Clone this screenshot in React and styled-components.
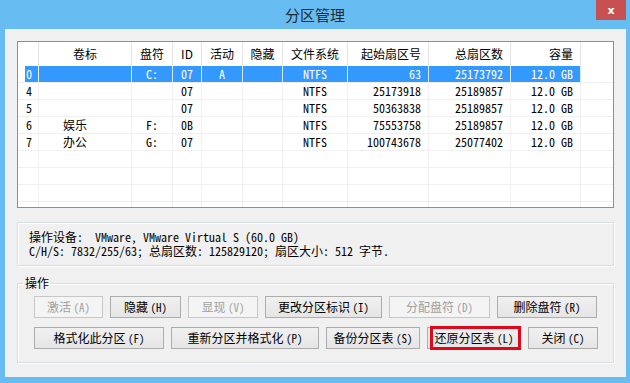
import React from 'react';
import styled, { createGlobalStyle } from 'styled-components';

const GlobalStyle = createGlobalStyle`
  html, body { margin: 0; padding: 0; background: #fff; }
  body { font-family: "Noto Sans CJK SC", sans-serif; }
  * { box-sizing: border-box; }
`;

const columns = [
  { key: 'label', title: '卷标', align: 'left', head: 'center' },
  { key: 'drive', title: '盘符', align: 'center', head: 'center' },
  { key: 'id', title: 'ID', align: 'center', head: 'center' },
  { key: 'active', title: '活动', align: 'center', head: 'center' },
  { key: 'hidden', title: '隐藏', align: 'center', head: 'center' },
  { key: 'fs', title: '文件系统', align: 'center', head: 'center' },
  { key: 'start', title: '起始扇区号', align: 'right', head: 'right' },
  { key: 'total', title: '总扇区数', align: 'right', head: 'right' },
  { key: 'size', title: '容量', align: 'right', head: 'right' },
];

const rows = [
  { index: '0', label: '', drive: 'C:', id: '07', active: 'A', hidden: '', fs: 'NTFS', start: '63', total: '25173792', size: '12.0 GB', selected: true },
  { index: '4', label: '', drive: '', id: '07', active: '', hidden: '', fs: 'NTFS', start: '25173918', total: '25189857', size: '12.0 GB' },
  { index: '5', label: '', drive: '', id: '07', active: '', hidden: '', fs: 'NTFS', start: '50363838', total: '25189857', size: '12.0 GB' },
  { index: '6', label: '娱乐', drive: 'F:', id: '0B', active: '', hidden: '', fs: 'NTFS', start: '75553758', total: '25189857', size: '12.0 GB' },
  { index: '7', label: '办公', drive: 'G:', id: '07', active: '', hidden: '', fs: 'NTFS', start: '100743678', total: '25077402', size: '12.0 GB' },
];

const emptyRows = 4;

export default function App() {
  return (
    <>
      <GlobalStyle />
      <Window>
        <TitleBar>
          <Title>分区管理</Title>
          <CloseButton>x</CloseButton>
        </TitleBar>
        <Client>
          <List>
            <Row $header>
              <HeadCell />
              {columns.map(c => (
                <HeadCell key={c.key} $align={c.head}>{c.title}</HeadCell>
              ))}
              <HeadCell $last />
            </Row>
            {rows.map(r => (
              <Row key={r.index}>
                <IndexCell $selected={r.selected}>{r.index}</IndexCell>
                {columns.map(c => (
                  <Cell key={c.key} $align={c.align} $selected={r.selected}>{r[c.key]}</Cell>
                ))}
                <Cell $last />
              </Row>
            ))}
            {Array.from({ length: emptyRows }).map((_, i) => (
              <Row key={'e' + i}>
                <IndexCell />
                {columns.map(c => <Cell key={c.key} />)}
                <Cell $last />
              </Row>
            ))}
          </List>

          <InfoBox>
            <div>操作设备:  VMware, VMware Virtual S (60.0 GB)</div>
            <div>C/H/S: 7832/255/63; 总扇区数: 125829120; 扇区大小: 512 字节.</div>
          </InfoBox>

          <Group>
            <Legend>操作</Legend>
            <ButtonRow>
              <Button $w={69} disabled>激活 <Key>(A)</Key></Button>
              <Button $w={71}>隐藏 <Key>(H)</Key></Button>
              <Button $w={70} disabled>显现 <Key>(V)</Key></Button>
              <Button $w={117}>更改分区标识 <Key>(I)</Key></Button>
              <Button $w={101} disabled>分配盘符 <Key>(D)</Key></Button>
              <Button $w={100}>删除盘符 <Key>(R)</Key></Button>
            </ButtonRow>
            <ButtonRow>
              <Button $w={130}>格式化此分区 <Key>(F)</Key></Button>
              <Button $w={148}>重新分区并格式化 <Key>(P)</Key></Button>
              <Button $w={94}>备份分区表 <Key>(S)</Key></Button>
              <Button $w={94} $marked>还原分区表 <Key>(L)</Key></Button>
              <Button $w={70}>关闭 <Key>(C)</Key></Button>
            </ButtonRow>
          </Group>
        </Client>
      </Window>
    </>
  );
}

const Window = styled.div`
  width: 630px;
  height: 383px;
  background: #67bdf2;
  display: flex;
  flex-direction: column;
`;

const TitleBar = styled.div`
  height: 29px;
  display: grid;
  grid-template-columns: 1fr auto 1fr;
  align-items: start;
`;

const Title = styled.div`
  grid-column: 2;
  font-size: 15px;
  line-height: 29px;
  color: #1c2a36;
`;

const CloseButton = styled.div`
  justify-self: end;
  width: 30px;
  height: 20px;
  margin-right: 4px;
  background: #c75050;
  color: #fff;
  font: bold 11px "DejaVu Sans", sans-serif;
  display: flex;
  align-items: center;
  justify-content: center;
`;

const Client = styled.div`
  margin: 0 4px 0 5px;
  height: 348px;
  background: #f0f0f0;
  padding: 12px 12px 0;
  display: flex;
  flex-direction: column;
`;

const List = styled.div`
  height: 167px;
  border: 1px solid #8e8f8f;
  background: #fff;
  overflow: hidden;
  flex-shrink: 0;
`;

const Row = styled.div`
  display: grid;
  grid-template-columns: 21px 93px 41px 29px 41px 40px 65px 81px 82px 70px 1fr;
  height: ${p => (p.$header ? 24 : 17)}px;
`;

const HeadCell = styled.div`
  border-right: ${p => (p.$last ? 'none' : '1px solid #e5e5e5')};
  font: 12px/24px "Noto Sans CJK SC", sans-serif;
  color: #000;
  text-align: ${p => p.$align || 'left'};
  padding: 0 7px;
  white-space: nowrap;
`;

const mono = `"Noto Sans Mono CJK SC", "Noto Sans CJK SC", monospace`;

const Cell = styled.div`
  border-right: ${p => (p.$last ? 'none' : `1px solid ${p.$selected ? '#d6eaff' : '#f0f0f0'}`)};
  border-bottom: 1px solid #f0f0f0;
  background: ${p => (p.$selected ? '#3399ff' : 'transparent')};
  color: ${p => (p.$selected ? '#fff' : '#000')};
  font: 12px/16px ${mono};
  text-align: ${p => p.$align || 'left'};
  padding: 0 7px 0 ${p => (p.$align === 'left' ? 24 : 7)}px;
  white-space: nowrap;
`;

const IndexCell = styled.div`
  border-right: 1px solid #f0f0f0;
  border-bottom: 1px solid #f0f0f0;
  background: ${p => (p.$selected ? 'linear-gradient(to right, transparent 7px, #3399ff 7px)' : 'transparent')};
  color: ${p => (p.$selected ? '#fff' : '#000')};
  font: 12px/16px ${mono};
  padding-left: 8px;
`;

const InfoBox = styled.div`
  margin-top: 14px;
  height: 44px;
  border: 1px solid #d5dfe5;
  box-shadow: inset 1px 1px #fff, 1px 1px #fff;
  padding: 7px 11px;
  font: 12px/14px ${mono};
  color: #000;
  white-space: pre;
  flex-shrink: 0;
`;

const Group = styled.fieldset`
  margin: 9px 0 0;
  border: 1px solid #d5dfe5;
  box-shadow: inset 1px 1px #fff, 1px 1px #fff;
  padding: 5px 14px 13px 16px;
  display: flex;
  flex-direction: column;
  gap: 9px;
  min-width: 0;
`;

const Legend = styled.legend`
  font: 12px/16px "Noto Sans CJK SC", sans-serif;
  color: #000;
  padding: 0 2px;
  margin-left: -11px;
`;

const ButtonRow = styled.div`
  display: flex;
  gap: 7px;
`;

const Button = styled.button`
  position: relative;
  width: ${p => p.$w}px;
  height: 22px;
  padding: 0;
  border: 1px solid ${p => (p.disabled ? '#c7c7c7' : '#acacac')};
  background: ${p => (p.disabled ? '#f4f4f4' : 'linear-gradient(#f0f0f0, #e5e5e5)')};
  color: ${p => (p.disabled ? '#a0a0a0' : '#000')};
  font: 12px/20px "Noto Sans CJK SC", sans-serif;
  white-space: nowrap;
  ${p => p.$marked && `
    &::after {
      content: '';
      position: absolute;
      top: -2px;
      bottom: -2px;
      left: 2px;
      right: -1px;
      border: 3px solid #e2061b;
    }
  `}
`;

const Key = styled.span`
  font: 11px ${mono};
`;
